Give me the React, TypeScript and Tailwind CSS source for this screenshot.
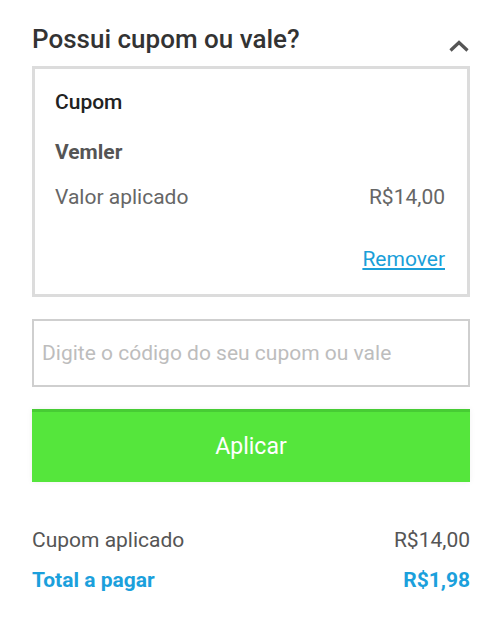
import { useState } from "react"

const font = { fontFamily: "Roboto, 'Noto Sans', sans-serif" }

const Chevron = ({ open }: { open: boolean }) => (
    <svg
        width="22"
        height="14"
        viewBox="0 0 22 14"
        className={open ? "" : "rotate-180"}
    >
        <path d="M2.5 11.5 L11 3.5 L19.5 11.5" fill="none" stroke="#555" strokeWidth="3.2" />
    </svg>
)

const App = () => {
    const [open, setOpen] = useState(true)
    const [code, setCode] = useState("")

    return (
        <div className="w-[500px] h-[627px] bg-white pl-[32px] pr-[30px] pt-[24px]" style={font}>
            <div className="flex items-start justify-between">
                <h2 className="text-[26px] leading-[30px] font-medium text-[#333]">Possui cupom ou vale?</h2>
                <button onClick={() => setOpen(!open)} className="mt-[15px]">
                    <Chevron open={open} />
                </button>
            </div>

            {open && (
                <div className="mt-[12px] border-[3px] border-[#dcdcdc] pl-[20px] pr-[22px] pt-[21px] pb-[23px]">
                    <div className="text-[21px] leading-[24px] font-medium text-[#222]">Cupom</div>
                    <div className="mt-[26px] text-[21px] leading-[24px] font-bold text-[#555]">Vemler</div>
                    <div className="mt-[21px] flex justify-between text-[21px] leading-[24px] text-[#666]">
                        <span>Valor aplicado</span>
                        <span>R$14,00</span>
                    </div>
                    <div className="mt-[38px] flex justify-end">
                        <a href="#" className="text-[21px] leading-[24px] text-[#1a9fd9] underline underline-offset-2">Remover</a>
                    </div>
                </div>
            )}

            <input
                value={code}
                onChange={(e) => setCode(e.target.value)}
                placeholder="Digite o código do seu cupom ou vale"
                className="mt-[22px] block w-full h-[68px] border-2 border-[#cfcfcf] px-[8px] text-[21px] text-[#444] placeholder:text-[#bdbdbd] outline-none"
            />

            <button className="mt-[22px] w-full h-[73px] bg-[#55e63c] border-t-[3px] border-[#47cc34] text-white text-[23px] shadow-[0_0_6px_rgba(0,0,0,0.06)]">
                Aplicar
            </button>

            <div className="mt-[46px] flex justify-between text-[21px] leading-[24px] text-[#555]">
                <span>Cupom aplicado</span>
                <span>R$14,00</span>
            </div>
            <div className="mt-[16px] flex justify-between text-[21px] leading-[24px] font-bold text-[#1ba0dc]">
                <span>Total a pagar</span>
                <span>R$1,98</span>
            </div>
        </div>
    )
}

export default App
